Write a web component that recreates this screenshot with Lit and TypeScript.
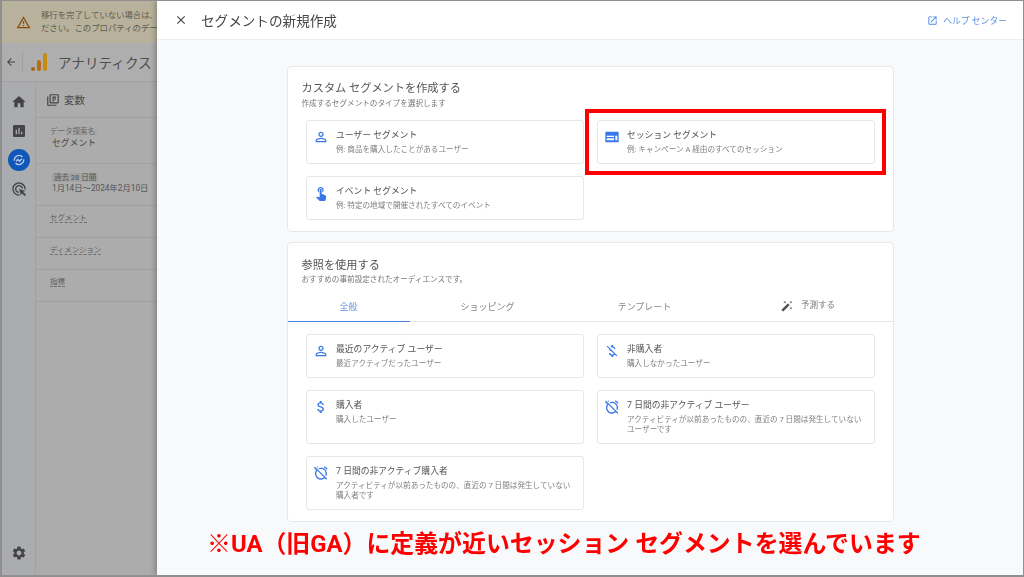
import { LitElement, html, css, svg } from 'lit';
import { customElement } from 'lit/decorators.js';

const P = {
  close: 'M19 6.41L17.59 5 12 10.59 6.41 5 5 6.41 10.59 12 5 17.59 6.41 19 12 13.41 17.59 19 19 17.59 13.41 12z',
  warn: 'M12 5.99L19.53 19H4.47L12 5.99M12 2L1 21h22L12 2zm1 14h-2v2h2v-2zm0-6h-2v4h2v-4z',
  back: 'M20 11H7.83l5.59-5.59L12 4l-8 8 8 8 1.41-1.41L7.83 13H20v-2z',
  home: 'M10 20v-6h4v6h5v-8h3L12 3 2 12h3v8z',
  chart: 'M19 3H5c-1.1 0-2 .9-2 2v14c0 1.1.9 2 2 2h14c1.1 0 2-.9 2-2V5c0-1.1-.9-2-2-2zM9 17H7v-7h2v7zm4 0h-2V7h2v10zm4 0h-2v-4h2v4z',
  click: 'M11.71 17.99C8.53 17.84 6 15.22 6 12c0-3.31 2.69-6 6-6 3.22 0 5.84 2.53 5.99 5.71l-2.1-.63C15.48 9.31 13.89 8 12 8c-2.21 0-4 1.79-4 4 0 1.89 1.31 3.48 3.08 3.89l.63 2.1zM22 12c0 .3-.01.6-.04.9l-1.97-.59c.01-.1.01-.21.01-.31 0-4.42-3.58-8-8-8s-8 3.58-8 8 3.58 8 8 8c.1 0 .21 0 .31-.01l.59 1.97c-.3.03-.6.04-.9.04-5.52 0-10-4.48-10-10S6.48 2 12 2s10 4.48 10 10zm-3.77 4.26L22 15l-10-3 3 10 1.26-3.77 4.27 4.27 1.97-1.97-4.27-4.27z',
  gear: 'M19.14 12.94c.04-.3.06-.61.06-.94 0-.32-.02-.64-.07-.94l2.03-1.58c.18-.14.23-.41.12-.61l-1.92-3.32c-.12-.22-.37-.29-.59-.22l-2.39.96c-.5-.38-1.03-.7-1.62-.94l-.36-2.54c-.04-.24-.24-.41-.48-.41h-3.84c-.24 0-.43.17-.47.41l-.36 2.54c-.59.24-1.13.57-1.62.94l-2.39-.96c-.22-.08-.47 0-.59.22L2.74 8.87c-.12.21-.08.47.12.61l2.03 1.58c-.05.3-.09.63-.09.94s.02.64.07.94l-2.03 1.58c-.18.14-.23.41-.12.61l1.92 3.32c.12.22.37.29.59.22l2.39-.96c.5.38 1.03.7 1.62.94l.36 2.54c.05.24.24.41.48.41h3.84c.24 0 .44-.17.47-.41l.36-2.54c.59-.24 1.13-.56 1.62-.94l2.39.96c.22.08.47 0 .59-.22l1.92-3.32c.12-.22.07-.47-.12-.61l-2.01-1.58zM12 15.6c-1.98 0-3.6-1.62-3.6-3.6s1.62-3.6 3.6-3.6 3.6 1.62 3.6 3.6-1.62 3.6-3.6 3.6z',
  library: 'M4 6H2v14c0 1.1.9 2 2 2h14v-2H4V6zm16-4H8c-1.1 0-2 .9-2 2v12c0 1.1.9 2 2 2h12c1.1 0 2-.9 2-2V4c0-1.1-.9-2-2-2zm0 14H8V4h12v12zM11 6h6v2h-6zm0 3h6v2h-6zm0 3h3v2h-3z',
  open: 'M19 19H5V5h7V3H5c-1.11 0-2 .9-2 2v14c0 1.1.89 2 2 2h14c1.1 0 2-.9 2-2v-7h-2v7zM14 3v2h3.59l-9.83 9.83 1.41 1.41L19 6.41V10h2V3h-7z',
  person: 'M12 5.9c1.16 0 2.1.94 2.1 2.1s-.94 2.1-2.1 2.1S9.9 9.16 9.9 8s.94-2.1 2.1-2.1m0 9c2.97 0 6.1 1.46 6.1 2.1v1.1H5.9V17c0-.64 3.13-2.1 6.1-2.1M12 4C9.79 4 8 5.79 8 8s1.79 4 4 4 4-1.79 4-4-1.79-4-4-4zm0 9c-2.67 0-8 1.34-8 4v3h16v-3c0-2.66-5.33-4-8-4z',
  touch: 'M9 11.24V7.5C9 6.12 10.12 5 11.5 5S14 6.12 14 7.5v3.74c1.21-.81 2-2.18 2-3.74C16 5.01 13.99 3 11.5 3S7 5.01 7 7.5c0 1.56.79 2.93 2 3.74zm9.84 4.63l-4.54-2.26c-.17-.07-.35-.11-.54-.11H13v-6c0-.83-.67-1.5-1.5-1.5S10 6.67 10 7.5v10.74l-3.43-.72c-.08-.01-.15-.03-.24-.03-.31 0-.59.13-.79.33l-.79.8 4.94 4.94c.27.27.65.44 1.06.44h6.79c.75 0 1.33-.55 1.44-1.28l.75-5.27c.01-.07.02-.14.02-.2 0-.62-.38-1.16-.91-1.38z',
  web: 'M21 4H3a1 1 0 0 0-1 1v14a1 1 0 0 0 1 1h18a1 1 0 0 0 1-1V5a1 1 0 0 0-1-1zM4 10h11v2H4zm0 4h11v3H4zm13-4h3v7h-3z',
  money: 'M11.8 10.9c-2.27-.59-3-1.2-3-2.15 0-1.09 1.01-1.85 2.7-1.85 1.78 0 2.44.85 2.5 2.1h2.21c-.07-1.72-1.12-3.3-3.21-3.81V3h-3v2.16c-1.94.42-3.5 1.68-3.5 3.61 0 2.31 1.91 3.46 4.7 4.13 2.5.6 3 1.48 3 2.41 0 .69-.49 1.79-2.7 1.79-2.06 0-2.87-.92-2.98-2.1h-2.2c.12 2.19 1.76 3.42 3.68 3.83V21h3v-2.15c1.95-.37 3.5-1.5 3.5-3.55 0-2.84-2.43-3.81-4.7-4.4z',
  moneyOff: 'M12.5 6.9c1.78 0 2.44.85 2.5 2.1h2.21c-.07-1.72-1.12-3.3-3.21-3.81V3h-3v2.16c-.53.12-1.03.3-1.48.54l1.47 1.47c.41-.17.91-.27 1.51-.27zM5.33 4.06L4.06 5.33 7.5 8.77c0 2.08 1.56 3.21 3.91 3.91l3.51 3.51c-.34.48-1.05.91-2.42.91-2.06 0-2.87-.92-2.98-2.1h-2.2c.12 2.19 1.76 3.42 3.68 3.83V21h3v-2.15c.96-.18 1.82-.55 2.45-1.12l2.22 2.22 1.27-1.27L5.33 4.06z',
  alarmOff: 'M12 6c3.87 0 7 3.13 7 7 0 .84-.16 1.65-.43 2.4l1.52 1.52c.58-1.19.91-2.51.91-3.92 0-4.97-4.03-9-9-9-1.41 0-2.73.33-3.92.91L9.6 6.43C10.35 6.16 11.16 6 12 6zm10-.28l-4.6-3.86-1.29 1.53 4.6 3.86L22 5.72zM2.92 2.29L1.65 3.57 2.98 4.9l-1.11.93 1.42 1.42 1.11-.94.8.8C3.83 8.69 3 10.75 3 13c0 4.97 4.03 9 9 9 2.25 0 4.31-.83 5.89-2.2l2.2 2.2 1.27-1.27L3.89 3.27l-.97-.98zm13.55 16.1C15.26 19.39 13.7 20 12 20c-3.87 0-7-3.13-7-7 0-1.7.61-3.26 1.61-4.47l9.86 9.86zM8.02 3.28L6.6 1.86l-.86.71 1.42 1.42.86-.71z',
  wand: 'M7.5 5.6L10 7 8.6 4.5 10 2 7.5 3.4 5 2l1.4 2.5L5 7zm12 9.8L17 14l1.4 2.5L17 19l2.5-1.4L22 19l-1.4-2.5L22 14zM22 2l-2.5 1.4L17 2l1.4 2.5L17 7l2.5-1.4L22 7l-1.4-2.5zm-7.63 5.29c-.39-.39-1.02-.39-1.41 0L1.29 18.96c-.39.39-.39 1.02 0 1.41l2.34 2.34c.39.39 1.02.39 1.41 0L16.7 11.05c.39-.39.39-1.02 0-1.41l-2.33-2.35z',
};

const icon = (d: string, size: number, color: string) => html`
  <svg width=${size} height=${size} viewBox="0 0 24 24" fill=${color} fill-rule="evenodd">${svg`<path d=${d}></path>`}</svg>
`;

const customCards = [
  { icon: P.person, title: 'ユーザー セグメント', sub: '例: 商品を購入したことがあるユーザー' },
  { icon: P.web, title: 'セッション セグメント', sub: '例: キャンペーン A 経由のすべてのセッション' },
  { icon: P.touch, title: 'イベント セグメント', sub: '例: 特定の地域で開催されたすべてのイベント' },
];

const refCards = [
  { icon: P.person, title: '最近のアクティブ ユーザー', sub: '最近アクティブだったユーザー' },
  { icon: P.moneyOff, title: '非購入者', sub: '購入しなかったユーザー' },
  { icon: P.money, title: '購入者', sub: '購入したユーザー' },
  { icon: P.alarmOff, title: '7 日間の非アクティブ ユーザー', sub: 'アクティビティが以前あったものの、直近の 7 日間は発生していないユーザーです' },
  { icon: P.alarmOff, title: '7 日間の非アクティブ購入者', sub: 'アクティビティが以前あったものの、直近の 7 日間は発生していない購入者です' },
];

@customElement('app-root')
export class AppRoot extends LitElement {
  static styles = css`
    :host {
      display: block;
      font-family: Roboto, 'Noto Sans CJK JP', sans-serif;
    }
    * { box-sizing: border-box; }
    svg { display: block; flex: none; }

    .frame {
      position: relative;
      display: flex;
      width: 1024px;
      height: 577px;
      overflow: hidden;
      border: solid #8f8f8f;
      border-width: 1px 1px 2px 2px;
      filter: blur(0.3px);
    }

    /* dimmed page behind the drawer */
    .page {
      width: 155px;
      flex: none;
      display: flex;
      flex-direction: column;
      background: #acacac;
      color: #4a4a4a;
      overflow: hidden;
    }
    .banner {
      height: 42px;
      flex: none;
      display: flex;
      align-items: center;
      gap: 10px;
      padding-left: 14px;
      background: #b8b29c;
      font-size: 8.4px;
      line-height: 13px;
      color: #5c5a50;
      white-space: nowrap;
    }
    .topbar {
      height: 39px;
      flex: none;
      display: flex;
      align-items: center;
      padding-left: 3px;
      background: #aeaeae;
      border-bottom: 1px solid #a0a0a0;
    }
    .topbar .sep {
      width: 1px;
      height: 22px;
      margin: 0 8px 0 5px;
      background: #a0a0a0;
    }
    .logo {
      display: flex;
      align-items: flex-end;
      gap: 2px;
      height: 18px;
      margin-right: 11px;
    }
    .logo i { display: block; width: 4px; border-radius: 2px; }
    .logo .a { height: 4px; background: #a8660f; }
    .logo .b { height: 11px; background: #b56d10; }
    .logo .c { height: 18px; background: #c98a12; }
    .product {
      font-size: 13.6px;
      white-space: nowrap;
      color: #4f4f4f;
    }
    .body { flex: 1; display: flex; min-height: 0; }
    .rail {
      width: 34px;
      flex: none;
      display: flex;
      flex-direction: column;
      align-items: center;
      padding-top: 12px;
      gap: 13px;
      background: #aaacaf;
      border-right: 1px solid #a0a2a4;
    }
    .rail .active {
      width: 22px;
      height: 22px;
      margin: -3px 0;
      border-radius: 50%;
      background: #0f57b8;
      display: flex;
      align-items: center;
      justify-content: center;
    }
    .rail .gear { margin-top: auto; margin-bottom: 14px; }
    .vars { flex: 1; min-width: 0; white-space: nowrap; }
    .vars .row { border-bottom: 1px solid #a0a0a0; padding-left: 14px; }
    .vars .head {
      height: 36px;
      display: flex;
      align-items: center;
      gap: 4px;
      padding-left: 10px;
      font-size: 10.5px;
    }
    .vars .name { height: 46px; padding-top: 8px; font-size: 7.5px; line-height: 11px; color: #666; }
    .vars .name b { display: block; padding-left: 2px; font-weight: 400; font-size: 8.8px; line-height: 12px; color: #4a4a4a; }
    .vars .range { height: 42px; padding-top: 8px; font-size: 8.3px; line-height: 11px; color: #555; }
    .vars .range span { background: #a2a2a2; padding: 0 2px; font-size: 7.5px; margin-left: 2px; }
    .vars .range div { margin-left: 2px; }
    .vars .item { height: 32px; padding-top: 5px; font-size: 7.4px; color: #5e5e5e; }
    .vars .item span { border-bottom: 1px dashed #707070; }

    /* drawer */
    .drawer {
      flex: 1;
      min-width: 0;
      display: flex;
      flex-direction: column;
      background: #f8f9fa;
      box-shadow: -2px 0 5px rgba(0, 0, 0, 0.25);
    }
    .drawer-head {
      height: 39px;
      flex: none;
      display: flex;
      align-items: center;
      padding: 0 16px 0 17px;
      background: #fff;
      border-bottom: 1px solid #eceef0;
    }
    .drawer-head h1 {
      margin: 0 0 0 13px;
      flex: 1;
      font-size: 13.6px;
      font-weight: 400;
      color: #444;
    }
    .help {
      display: flex;
      align-items: center;
      gap: 5px;
      font-size: 8.8px;
      color: #5f92e0;
    }
    .content {
      flex: 1;
      display: flex;
      flex-direction: column;
      align-items: center;
      gap: 10px;
      padding-top: 26px;
    }
    .section {
      width: 607px;
      background: #fff;
      border: 1px solid #e6e8ea;
      border-radius: 4px;
    }
    .section-head { padding: 14px 14px 0; }
    .section-head h2 {
      margin: 0;
      font-size: 11.2px;
      line-height: 16px;
      font-weight: 400;
      color: #555;
    }
    .section-head p {
      margin: 0;
      font-size: 7.6px;
      line-height: 14px;
      color: #777;
    }
    .custom { height: 166px; }
    .reference { height: 280px; }
    .reference .section-head { padding-top: 15px; }
    .reference .section-head p { margin-top: -1px; }
    .grid {
      display: grid;
      grid-template-columns: 278px 278px;
      column-gap: 13px;
      row-gap: 12px;
      padding: 9px 0 0 18.5px;
    }
    .card {
      display: flex;
      padding: 7px 8px 8px 6px;
      border: 1px solid #e6e8ea;
      border-radius: 3px;
      background: #fff;
    }
    .card .ic { width: 23px; flex: none; padding-top: 1px; }
    .card .title { font-size: 8.8px; line-height: 14px; color: #555; }
    .card .sub { margin-top: 3px; font-size: 7.6px; line-height: 10px; color: #808080; }
    .tabs {
      display: grid;
      grid-template-columns: 122px 156px 158px 169px;
      height: 28px;
      margin-top: 7px;
      border-bottom: 1px solid #e6e8ea;
    }
    .tab {
      display: flex;
      align-items: center;
      justify-content: center;
      gap: 8px;
      padding-bottom: 3px;
      font-size: 9px;
      color: #888;
    }
    .tab.on { color: #5f92e0; border-bottom: 1px solid #4a86e0; height: 28px; }
    .tab.predict { padding-bottom: 9px; font-size: 8.6px; color: #777; }
    .tab.predict svg { margin-top: 5px; }
    .tabs + .grid { padding-top: 12px; }

    .note {
      align-self: flex-start;
      margin: 0 0 0 50px;
      font-size: 23.9px;
      line-height: 24px;
      font-weight: 700;
      color: #f00;
      white-space: nowrap;
    }

    /* red annotation drawn over the screenshot */
    .mark {
      position: absolute;
      left: 583px;
      top: 108px;
      width: 301px;
      height: 66px;
      border: 4px solid #f00;
    }
  `;

  private card(c: { icon: string; title: string; sub: string }) {
    return html`
      <div class="card">
        <div class="ic">${icon(c.icon, 16, '#3b78e7')}</div>
        <div>
          <div class="title">${c.title}</div>
          <div class="sub">${c.sub}</div>
        </div>
      </div>
    `;
  }

  render() {
    return html`
      <div class="frame">
        <div class="page">
          <div class="banner">
            ${icon(P.warn, 15, '#8a4b10')}
            <div>移行を完了していない場合は、お早めに完了してく<br />ださい。このプロパティのデータは</div>
          </div>
          <div class="topbar">
            ${icon(P.back, 12, '#444')}
            <div class="sep"></div>
            <div class="logo"><i class="a"></i><i class="b"></i><i class="c"></i></div>
            <div class="product">アナリティクス</div>
          </div>
          <div class="body">
            <div class="rail">
              ${icon(P.home, 16, '#444')} ${icon(P.chart, 16, '#444')}
              <div class="active">
                <svg width="14" height="14" viewBox="0 0 24 24" fill="none" stroke="#b9cbe6" stroke-width="2.4">
                  <path d="M4 13a8 8 0 0 1 14-6M20 11a8 8 0 0 1-14 6M7 14l3-3 3 3 4-4"></path>
                </svg>
              </div>
              ${icon(P.click, 16, '#444')}
              <div class="gear">${icon(P.gear, 16, '#444')}</div>
            </div>
            <div class="vars">
              <div class="row head">${icon(P.library, 14, '#444')}変数</div>
              <div class="row name">データ探索名:<b>セグメント</b></div>
              <div class="row range"><span>過去 28 日間</span><div>1月14日～2024年2月10日</div></div>
              <div class="row item"><span>セグメント</span></div>
              <div class="row item"><span>ディメンション</span></div>
              <div class="row item"><span>指標</span></div>
            </div>
          </div>
        </div>

        <div class="drawer">
          <div class="drawer-head">
            ${icon(P.close, 14, '#444')}
            <h1>セグメントの新規作成</h1>
            <div class="help">${icon(P.open, 11, '#4a86e0')}ヘルプ センター</div>
          </div>
          <div class="content">
            <div class="section custom">
              <div class="section-head">
                <h2>カスタム セグメントを作成する</h2>
                <p>作成するセグメントのタイプを選択します</p>
              </div>
              <div class="grid">${customCards.map((c) => this.card(c))}</div>
            </div>
            <div class="section reference">
              <div class="section-head">
                <h2>参照を使用する</h2>
                <p>おすすめの事前設定されたオーディエンスです。</p>
              </div>
              <div class="tabs">
                <div class="tab on">全般</div>
                <div class="tab">ショッピング</div>
                <div class="tab">テンプレート</div>
                <div class="tab predict">${icon(P.wand, 12, '#555')}予測する</div>
              </div>
              <div class="grid">${refCards.map((c) => this.card(c))}</div>
            </div>
            <div class="note">※UA（旧GA）に定義が近いセッション セグメントを選んでいます</div>
          </div>
        </div>

        <div class="mark"></div>
      </div>
    `;
  }
}
